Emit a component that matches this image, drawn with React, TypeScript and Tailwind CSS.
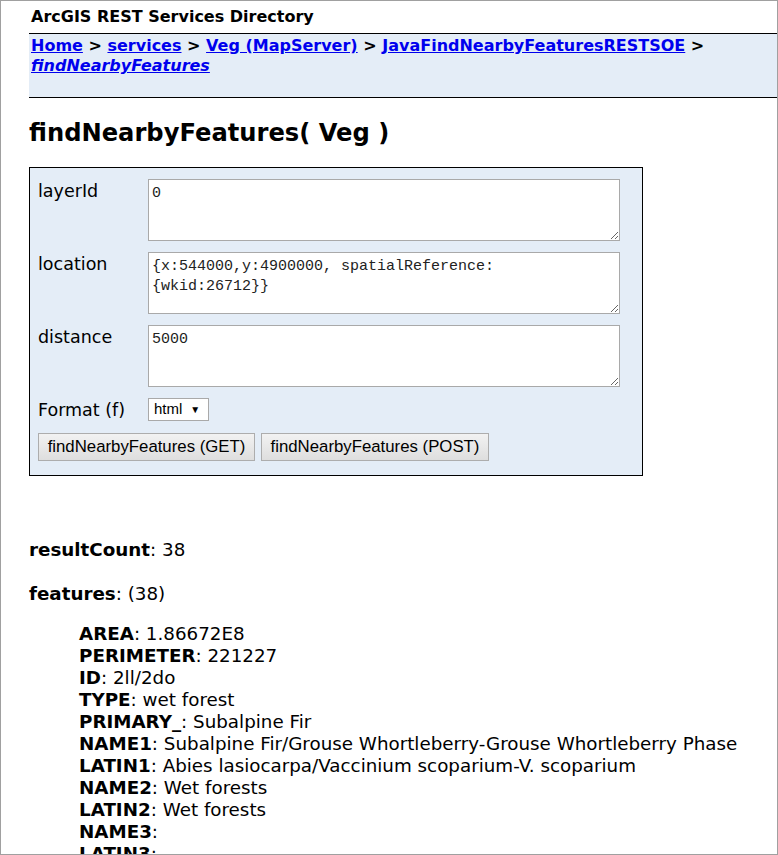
import React from 'react';

const FEATURE_ROWS: [string, string][] = [
  ['AREA', '1.86672E8'],
  ['PERIMETER', '221227'],
  ['ID', '2ll/2do'],
  ['TYPE', 'wet forest'],
  ['PRIMARY_', 'Subalpine Fir'],
  ['NAME1', 'Subalpine Fir/Grouse Whortleberry-Grouse Whortleberry Phase'],
  ['LATIN1', 'Abies lasiocarpa/Vaccinium scoparium-V. scoparium'],
  ['NAME2', 'Wet forests'],
  ['LATIN2', 'Wet forests'],
  ['NAME3', ''],
  ['LATIN3', ''],
];

const PARAMS: [string, string][] = [
  ['layerId', '0'],
  ['location', '{x:544000,y:4900000, spatialReference:\n{wkid:26712}}'],
  ['distance', '5000'],
];

function Crumb({ children }: { children: React.ReactNode }) {
  return <a href="#" className="text-[#0000ee] underline">{children}</a>;
}

export default function App() {
  return (
    <div className="w-[778px] h-[855px] overflow-hidden border border-[#a0a0a0] bg-white text-black font-['DejaVu_Sans',Verdana,sans-serif]">
      <div className="pl-[30px] pt-[6px] h-[32px] text-[16px] font-bold leading-[20px]">
        ArcGIS REST Services Directory
      </div>

      <div className="ml-[28px] h-[65px] border-t border-b border-black bg-[#e4edf7] pl-[2px] pt-[2px] text-[16px] font-bold leading-[20px]">
        <Crumb>Home</Crumb> &gt; <Crumb>services</Crumb> &gt; <Crumb>Veg (MapServer)</Crumb> &gt;{' '}
        <Crumb>JavaFindNearbyFeaturesRESTSOE</Crumb> &gt;
        <br />
        <a href="#" className="text-[#0000ee] underline italic">findNearbyFeatures</a>
      </div>

      <h2 className="pl-[28px] pt-[20px] text-[24.2px] font-bold leading-[30px]">
        findNearbyFeatures( Veg )
      </h2>

      {/* parameter form */}
      <div className="ml-[28px] mt-[19px] w-[614px] h-[309px] border border-black bg-[#e4edf7] pl-[8px] pt-[11px] text-[17.5px]">
        {PARAMS.map(([label, value]) => (
          <div key={label} className="flex h-[73px]">
            <div className="w-[110px] pt-[2px] leading-[20px]">{label}</div>
            <textarea
              readOnly
              defaultValue={value}
              className="w-[472px] h-[62px] border border-[#a9a9a9] bg-white px-[3px] pt-[4px] font-['Liberation_Mono',Consolas,monospace] text-[15px] leading-[20px] text-[#222] outline-none"
            />
          </div>
        ))}
        <div className="flex h-[35px] items-start">
          <div className="w-[110px] pt-[2px] leading-[20px]">Format (f)</div>
          <div className="flex h-[23px] w-[61px] items-center gap-[8px] border border-[#a9a9a9] bg-white pl-[5px] font-['Liberation_Sans',Arial,sans-serif] text-[15px]">
            html <span className="text-[10px]">▼</span>
          </div>
        </div>
        <div className="flex gap-[6px]">
          <button className="h-[28px] w-[217px] border border-[#adadad] bg-gradient-to-b from-[#f2f2f2] to-[#dedede] font-['Liberation_Sans',Arial,sans-serif] text-[16.8px]">
            findNearbyFeatures (GET)
          </button>
          <button className="h-[28px] w-[228px] border border-[#adadad] bg-gradient-to-b from-[#f2f2f2] to-[#dedede] font-['Liberation_Sans',Arial,sans-serif] text-[16.8px]">
            findNearbyFeatures (POST)
          </button>
        </div>
      </div>

      {/* results */}
      <div className="pl-[28px] pt-[63px] text-[18.3px] leading-[22px]">
        <div><b>resultCount</b>: 38</div>
        <div className="mt-[22px]"><b>features</b>: (38)</div>
        <div className="mt-[18px] pl-[50px]">
          {FEATURE_ROWS.map(([k, v]) => (
            <div key={k} className="whitespace-nowrap">
              <b>{k}</b>: {v}
            </div>
          ))}
        </div>
      </div>
    </div>
  );
}
